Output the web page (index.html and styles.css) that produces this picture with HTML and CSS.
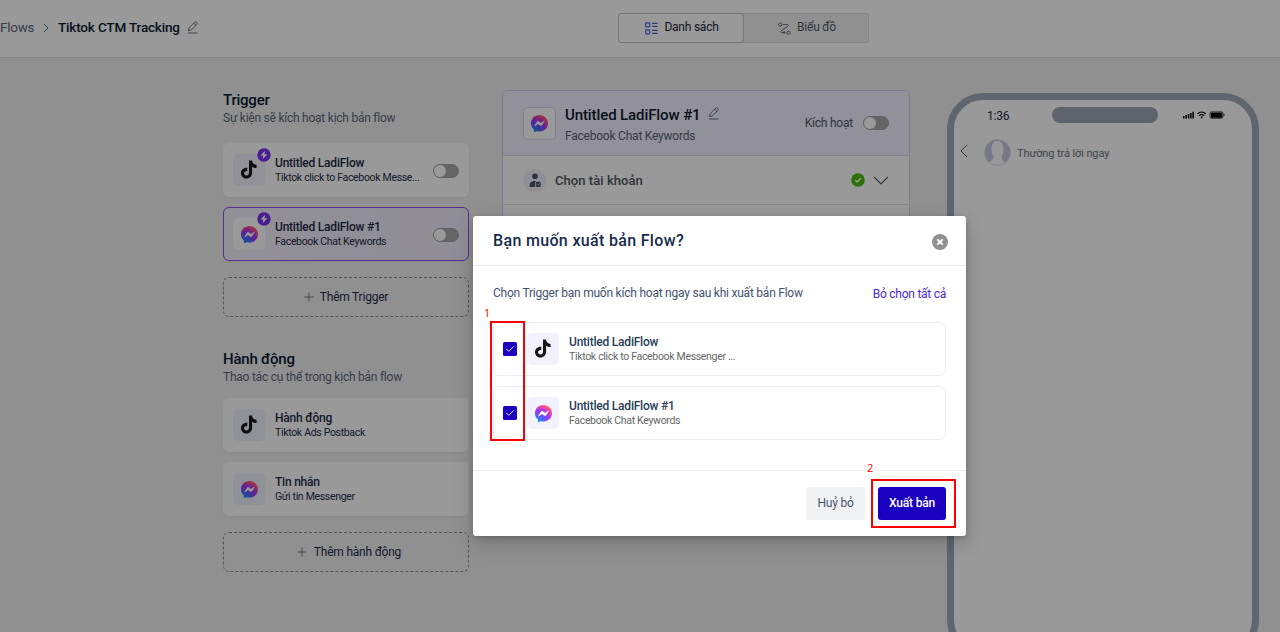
FILE: index.html
```html
<!DOCTYPE html>
<html lang="vi">
<head>
<meta charset="utf-8">
<title>Tiktok CTM Tracking</title>
<link rel="stylesheet" href="styles.css">
</head>
<body>
<svg class="defs" width="0" height="0">
  <defs>
    <radialGradient id="mg" cx=".19" cy="1" r="1.09"><stop offset="0" stop-color="#09f"/><stop offset=".6" stop-color="#a033ff"/><stop offset=".93" stop-color="#ff5280"/><stop offset="1" stop-color="#ff7061"/></radialGradient>
    <symbol id="messenger" viewBox="0 0 24 24"><path fill="url(#mg)" d="M12 0C5.2 0 0 5 0 11.600c0 3.500 1.400 6.500 3.800 8.600.2.200.3.400.3.700v2.200c.1.700.8 1.100 1.400.9l2.400-1.100c.2-.1.400-.1.600 0 1.100.3 2.300.5 3.500.5 6.800 0 12-5 12-11.600S18.800 0 12 0z"/><path fill="#fff" d="M4.800 15l3.500-5.600c.6-.9 1.800-1.100 2.600-.5l2.800 2.100c.3.200.6.200.9 0l3.800-2.900c.5-.4 1.100.2.800.8l-3.500 5.600c-.6.900-1.800 1.100-2.600.5l-2.800-2.100c-.3-.2-.6-.2-.9 0l-3.800 2.900c-.5.400-1.100-.2-.8-.8z"/></symbol>
    <symbol id="tiktok" viewBox="0 0 16 18"><path fill="#161616" d="M8 0h3c.2 2.400 1.900 4.300 4.600 4.500v3.100c-1.700.1-3.200-.4-4.500-1.300V12c0 3.700-2.500 6-5.500 6S0 15.700 0 12.700c0-3.300 2.800-5.800 6.300-5.400v3.200c-1.800-.4-3.200.6-3.200 2.200 0 1.300 1.100 2.300 2.500 2.300C7.100 15 8 13.900 8 12.300z"/></symbol>
    <symbol id="bolt" viewBox="0 0 14 14"><circle cx="7" cy="7" r="6.700" fill="#7b2ff2"/><path fill="#fff" d="M7.900 2.700L3.500 7.500h2.700L5.700 11.300l4.800-5H7.700z"/></symbol>
    <symbol id="pencil" viewBox="0 0 12 13"><path fill="none" stroke="currentColor" stroke-width=".9" stroke-linejoin="round" d="M1.300 9.800l1-3.300L7.400 1.400c.7-.6 1.700-.6 2.300 0 .6.600.6 1.500 0 2.100L4.500 8.800zM6.800 2.200l2 2M1 12h9.500"/></symbol>
    <symbol id="plus" viewBox="0 0 10 10"><path fill="none" stroke="currentColor" d="M5 .5v9M.5 5h9"/></symbol>
    <symbol id="check" viewBox="0 0 14 14"><rect width="14" height="14" rx="1.500" fill="#1c00c2"/><path fill="none" stroke="#fff" stroke-width=".9" d="M3.300 6.800l2.500 2.500 5-4.900"/></symbol>
  </defs>
</svg>

<div class="page">
  <header class="topbar">
    <nav class="crumbs">
      <span class="crumb">Flows</span>
      <svg class="crumb-sep" width="6" height="10" viewBox="0 0 6 10"><path d="M1 1l4 4-4 4"/></svg>
      <span class="crumb-current">Tiktok CTM Tracking</span>
      <svg class="pencil" width="12" height="13"><use href="#pencil"/></svg>
    </nav>
    <div class="tabs">
      <div class="tab tab-active">
        <svg width="13" height="13" viewBox="0 0 13 13" fill="none" stroke="#4260d8" stroke-width="1.100"><rect x=".7" y=".9" width="4" height="4" rx=".6"/><rect x=".7" y="7.900" width="4" height="4" rx=".6"/><path d="M7 1.400h5.500M7 4.400h5.500M7 8.400h5.500M7 11.400h5.500"/></svg>
        <span class="tab-label">Danh sách</span>
      </div>
      <div class="tab">
        <svg width="13" height="13" viewBox="0 0 13 13" fill="none" stroke="#5d6878"><circle cx="2.300" cy="2.600" r="1.600"/><circle cx="10.500" cy="10.700" r="1.600"/><path d="M5 2.600h4.300c1 0 1.300 1.100.5 1.700L3.300 8.700c-.8.700-.5 1.900.5 1.900h3.200M5.600 9l1.500 1.600-1.500 1.600"/></svg>
        <span class="tab-label">Biểu đồ</span>
      </div>
    </div>
  </header>

  <main class="workspace">
    <aside class="steps">
      <h2 class="group-title">Trigger</h2>
      <p class="group-sub">Sự kiện sẽ kích hoạt kịch bản flow</p>
      <div class="card">
        <div class="tile"><svg class="tiktok" width="16" height="19"><use href="#tiktok"/></svg><svg class="bolt" width="14" height="14"><use href="#bolt"/></svg></div>
        <div class="card-text"><div class="card-title">Untitled LadiFlow</div><div class="card-sub">Tiktok click to Facebook Messe...</div></div>
        <span class="toggle"></span>
      </div>
      <div class="card card-selected">
        <div class="tile"><svg width="17" height="17"><use href="#messenger"/></svg><svg class="bolt" width="14" height="14"><use href="#bolt"/></svg></div>
        <div class="card-text"><div class="card-title">Untitled LadiFlow #1</div><div class="card-sub">Facebook Chat Keywords</div></div>
        <span class="toggle"></span>
      </div>
      <div class="add"><svg width="10" height="10"><use href="#plus"/></svg><span>Thêm Trigger</span></div>
      <h2 class="group-title group-actions">Hành động</h2>
      <p class="group-sub sub-actions">Thao tác cụ thể trong kịch bản flow</p>
      <div class="card">
        <div class="tile tile-blue"><svg class="tiktok" width="16" height="19"><use href="#tiktok"/></svg></div>
        <div class="card-text"><div class="card-title">Hành động</div><div class="card-sub">Tiktok Ads Postback</div></div>
      </div>
      <div class="card">
        <div class="tile tile-blue"><svg width="17" height="17"><use href="#messenger"/></svg></div>
        <div class="card-text"><div class="card-title">Tin nhắn</div><div class="card-sub">Gửi tin Messenger</div></div>
      </div>
      <div class="add add-action"><svg width="10" height="10"><use href="#plus"/></svg><span>Thêm hành động</span></div>
    </aside>

    <section class="detail">
      <div class="detail-head">
        <div class="detail-tile"><svg width="17" height="17"><use href="#messenger"/></svg></div>
        <div class="detail-text">
          <div class="detail-title"><span>Untitled LadiFlow #1</span><svg class="pencil" width="12" height="13"><use href="#pencil"/></svg></div>
          <div class="detail-sub">Facebook Chat Keywords</div>
        </div>
        <span class="detail-label">Kích hoạt</span>
        <span class="toggle"></span>
      </div>
      <div class="detail-row">
        <div class="account"><svg width="12" height="15" viewBox="0 0 12 15" fill="#4a5568"><circle cx="6" cy="3.300" r="2.800"/><path d="M.5 14C.3 10 2 8 5.500 8h1.800c-1 .6-1.300 1.300-1.300 2.500V14z"/><rect x="6.700" y="8.700" width="5" height="5.300" rx="1.200"/><path d="M7.900 11.200l1 1 1.700-1.800" fill="none" stroke="#ddd" stroke-width=".8"/></svg></div>
        <span class="account-label">Chọn tài khoản</span>
        <svg width="14" height="14" viewBox="0 0 14 14"><circle cx="7" cy="7" r="6.800" fill="#48bd0b"/><path d="M4.200 7.100l2 1.900 3.700-3.700" fill="none" stroke="#fff" stroke-width="1.400"/></svg>
        <svg class="chevron" width="16" height="9" viewBox="0 0 16 9"><path d="M1 .8l7 7 7-7"/></svg>
      </div>
    </section>

    <section class="phone">
      <div class="status">
        <span class="time">1:36</span>
        <span class="island"></span>
        <svg class="signals" width="42" height="8" viewBox="0 0 42 8"><path d="M0 5h1.500v2.500H0zM2.400 4h1.500v3.500H2.400zM4.800 3h1.500v4.500H4.800zM7.100 2h1.500v5.500H7.100zM9.400.7h1.500v6.800H9.400z"/><path d="M14.500 2.900c2.400-2.500 6-2.500 8.400 0M16 4.700c1.500-1.500 3.900-1.500 5.400 0" fill="none" stroke="#000" stroke-width="1.100"/><path d="M17.400 5.900c.8-.7 1.800-.7 2.600 0l-1.300 1.500z"/><rect x="27" y=".8" width="13" height="6.600" rx="1.600" fill="none" stroke="#000" stroke-width=".6"/><rect x="27.800" y="1.500" width="11.500" height="5.200" rx=".8"/><path d="M40.600 2.800c1.300.3 1.300 2.200 0 2.500z"/></svg>
      </div>
      <div class="chat-head">
        <svg class="back" width="8" height="14" viewBox="0 0 8 14"><path d="M7.200.8L1 7l6.200 6.200"/></svg>
        <svg width="27" height="27" viewBox="0 0 27 27"><defs><clipPath id="av"><circle cx="13.500" cy="13.500" r="12.800"/></clipPath></defs><circle cx="13.500" cy="13.500" r="13" fill="#c4c9dd"/><g clip-path="url(#av)" fill="#fdfdfd"><path d="M13.500 2c3.800 0 6 3 6 7.500 0 3.600-.8 6.300-1.800 7.600v2c.3 2 2 3 5.300 4.400V27H4v-3.500c3.300-1.400 5-2.400 5.300-4.400v-2C8.300 15.800 7.500 13 7.500 9.500c0-4.500 2.200-7.500 6-7.500z"/></g><circle cx="13.500" cy="13.500" r="12.900" fill="none" stroke="#d5d8e2" stroke-width=".7"/></svg>
        <span class="reply">Thường trả lời ngay</span>
      </div>
    </section>
  </main>
</div>

<div class="backdrop">
  <div class="modal">
    <div class="modal-head">
      <span class="modal-title">Bạn muốn xuất bản Flow?</span>
      <svg width="16" height="16" viewBox="0 0 16 16"><circle cx="8" cy="8" r="8" fill="#919191"/><path d="M5.300 5.300l5.400 5.400M10.700 5.300l-5.400 5.400" stroke="#fff" stroke-width="1.800"/></svg>
    </div>
    <div class="modal-body">
      <div class="prompt"><span class="prompt-text">Chọn Trigger bạn muốn kích hoạt ngay sau khi xuất bản Flow</span><span class="deselect">Bỏ chọn tất cả</span></div>
      <div class="option">
        <svg width="14" height="14"><use href="#check"/></svg>
        <div class="tile tile-option"><svg class="tiktok" width="16" height="19"><use href="#tiktok"/></svg></div>
        <div class="card-text"><div class="card-title">Untitled LadiFlow</div><div class="card-sub">Tiktok click to Facebook Messenger ...</div></div>
      </div>
      <div class="option">
        <svg width="14" height="14"><use href="#check"/></svg>
        <div class="tile tile-option"><svg width="17" height="17"><use href="#messenger"/></svg></div>
        <div class="card-text"><div class="card-title">Untitled LadiFlow #1</div><div class="card-sub">Facebook Chat Keywords</div></div>
      </div>
    </div>
    <div class="modal-foot">
      <button class="btn btn-cancel">Huỷ bỏ</button>
      <button class="btn btn-publish">Xuất bản</button>
    </div>
    <div class="mark mark-one"><span class="mark-num">1</span></div>
    <div class="mark mark-two"><span class="mark-num">2</span></div>
  </div>
</div>
</body>
</html>
```
FILE: styles.css
```css
* { box-sizing: border-box; }
body { margin: 0; height: 632px; overflow: hidden; font-family: Roboto, sans-serif; font-size: 12px; letter-spacing: -.22px; color: #1c2b46; background: #f1f1f2; }
h2, p { margin: 0; }
svg { flex: none; display: block; }
.defs { position: absolute; }
.page { height: 632px; overflow: hidden; }

.topbar { height: 58px; background: #fff; border-bottom: 1px solid #dedeea; display: flex; align-items: flex-start; }
.crumbs { width: 618px; height: 55px; display: flex; align-items: center; font-size: 13.5px; white-space: nowrap; }
.crumb { width: 43px; padding-bottom: 2px; color: #5c6675; letter-spacing: -.25px; }
.crumb-sep { fill: none; stroke: #687280; margin-right: 9px; }
.crumb-current { width: 129px; padding-bottom: 2px; font-weight: 500; letter-spacing: -.17px; color: #0a1930; }
.pencil { color: #5c6675; }
.tabs { display: flex; width: 251px; height: 30px; margin-top: 13px; border: 1px solid #e0e1e5; border-radius: 3px; background: #f1f1f2; }
.tab { flex: 1; display: flex; align-items: center; justify-content: center; gap: 6px; padding-left: 2px; color: #4f5b6c; }
.tab-label { padding-bottom: 2px; }
.tab-active { margin: -1px 0 -1px -1px; background: #fff; border: 1px solid #c5c7cc; border-radius: 3px; color: #1c2434; }

.workspace { display: flex; align-items: flex-start; padding-left: 223px; }
.steps { width: 246px; padding-top: 33px; }
.group-title { font-size: 15px; font-weight: 500; line-height: 19px; color: #0a1930; }
.group-sub { line-height: 17px; margin-bottom: 16px; letter-spacing: -.24px; color: #5c6675; }
.group-actions { margin-top: 33px; }
.sub-actions { margin-bottom: 12px; }
.card { height: 54px; display: flex; align-items: center; padding: 0 10px; margin-bottom: 10px; border-radius: 6px; background: #fff; box-shadow: 0 1px 3px rgba(30, 40, 60, .06); }
.card-selected { background: linear-gradient(90deg, #f4f0fc, #efebf8); border: 1px solid #9150ee; padding: 0 9px; }
.tile { position: relative; flex: none; width: 32px; height: 32px; border-radius: 5px; background: #f3f1fd; display: flex; align-items: center; justify-content: center; }
.card-selected .tile { background: #fff; }
.tile-blue { background: #eef3fd; }
.tiktok { margin-bottom: 1px; }
.bolt { position: absolute; top: -6px; right: -6px; }
.card-text { flex: 1; margin-left: 10px; white-space: nowrap; }
.card-title { font-weight: 500; line-height: 16px; }
.card-sub { font-size: 10.5px; line-height: 14px; letter-spacing: -.32px; }
.toggle { flex: none; width: 26px; height: 14px; border-radius: 7px; background: #a9a9a9; border: 1px solid #a3a3a3; display: flex; }
.card .toggle { margin-top: 2px; }
.toggle::before { content: ""; width: 12px; height: 12px; border-radius: 50%; background: #fff; }
.add { height: 40px; margin-top: 16px; border: 1px dashed #858d9c; border-radius: 6px; display: flex; align-items: center; justify-content: center; gap: 6px; }
.add svg { color: #7b7f88; }
.add-action { padding-left: 6px; gap: 7px; }

.detail { width: 408px; height: 360px; margin: 32px 0 0 33px; border: 1px solid #d5cdf2; border-radius: 6px; background: #fff; overflow: hidden; }
.detail-head { height: 65px; display: flex; align-items: center; padding: 0 20px; background: #f3f0fd; border-bottom: 1px solid #dcd9e8; }
.detail-tile { width: 33px; height: 33px; border: 1px solid #d9d2f4; border-radius: 5px; background: #fff; display: flex; align-items: center; justify-content: center; }
.detail-text { flex: 1; margin-left: 9px; padding-top: 3px; }
.detail-title { display: flex; align-items: center; gap: 8px; font-size: 15px; font-weight: 500; line-height: 22px; letter-spacing: -.1px; color: #0a1930; }
.detail-title .pencil { margin: -2px 0 0 -1px; }
.detail-sub { line-height: 20px; color: #596372; }
.detail-label { margin-right: 10px; color: #4e5968; }
.detail-row { height: 49px; display: flex; align-items: center; padding: 0 20px; border-bottom: 1px solid #e4e4e8; }
.account { width: 23px; height: 23px; border-radius: 50%; background: #f0eef9; display: flex; align-items: center; justify-content: center; }
.account-label { flex: 1; margin-left: 9px; font-size: 13px; font-weight: 500; letter-spacing: .06px; color: #50555e; }
.chevron { margin-left: 8px; fill: none; stroke: #4f5663; stroke-width: 1.2; }

.phone { width: 312px; height: 563px; margin: 35px 0 0 37px; border: 7px solid #9eaab7; border-radius: 36px; background: #fff; }
.status { height: 39px; display: flex; align-items: center; padding: 0 27px 9px 33px; }
.time { width: 65px; padding-top: 1px; letter-spacing: -.25px; }
.island { width: 107px; height: 16px; border-radius: 8px; background: #9ea6b3; margin-right: 25px; }
.chat-head { height: 27px; display: flex; align-items: center; padding-left: 6px; color: #68727f; font-size: 11px; letter-spacing: -.1px; }
.back { margin: -3px 16px 0 0; fill: none; stroke: #565b63; }
.reply { margin-left: 6px; padding-top: 1px; }

.backdrop { position: absolute; inset: 0; background: rgba(0, 0, 0, .4); display: flex; align-items: flex-start; padding: 216px 0 0 473px; }
.modal { position: relative; width: 493px; height: 320px; border-radius: 3px; background: #fff; box-shadow: 0 8px 22px rgba(0, 0, 0, .16), 0 2px 6px rgba(0, 0, 0, .2); }
.modal-head { height: 50px; border-bottom: 1px solid #e8eaec; padding: 2px 18px 0 20px; display: flex; align-items: center; justify-content: space-between; }
.modal-title { padding-bottom: 2px; font-size: 16px; font-weight: 500; letter-spacing: .33px; color: #172b4d; }
.modal-body { height: 204px; padding: 19px 20px 0; }
.prompt { height: 17px; display: flex; align-items: center; justify-content: space-between; margin-bottom: 20px; color: #42526e; white-space: nowrap; }
.prompt-text { padding-bottom: 1px; letter-spacing: -.23px; }
.deselect { color: #4a25d9; letter-spacing: -.26px; }
.option { height: 54px; display: flex; align-items: center; padding-left: 9px; margin-bottom: 10px; border: 1px solid #ebedef; border-radius: 6px; }
.option .card-title { color: #2b3d5a; }
.option .card-sub { color: #666; }
.tile-option { margin-left: 10px; }
.modal-foot { height: 66px; border-top: 1px solid #eceeef; padding: 16px 20px 0; display: flex; justify-content: flex-end; gap: 13px; }
.btn { height: 33px; padding: 0 0 2px; border: 0; border-radius: 3px; font: 400 12px Roboto, sans-serif; letter-spacing: -.2px; }
.btn-cancel { width: 59px; background: #f1f2f4; color: #42526e; }
.btn-publish { width: 68px; background: #1c00c2; color: #fff; font-weight: 500; }

.mark { position: absolute; border: 2px solid #f00; }
.mark-one { left: 17px; top: 105px; width: 35px; height: 120px; }
.mark-two { left: 398px; top: 263px; width: 85px; height: 49px; }
.mark-num { position: absolute; top: -18px; left: -8px; font: 11px/15px "Open Sans", sans-serif; letter-spacing: 0; color: #f00; }
.mark-two .mark-num { top: -21px; left: -6px; }
```
